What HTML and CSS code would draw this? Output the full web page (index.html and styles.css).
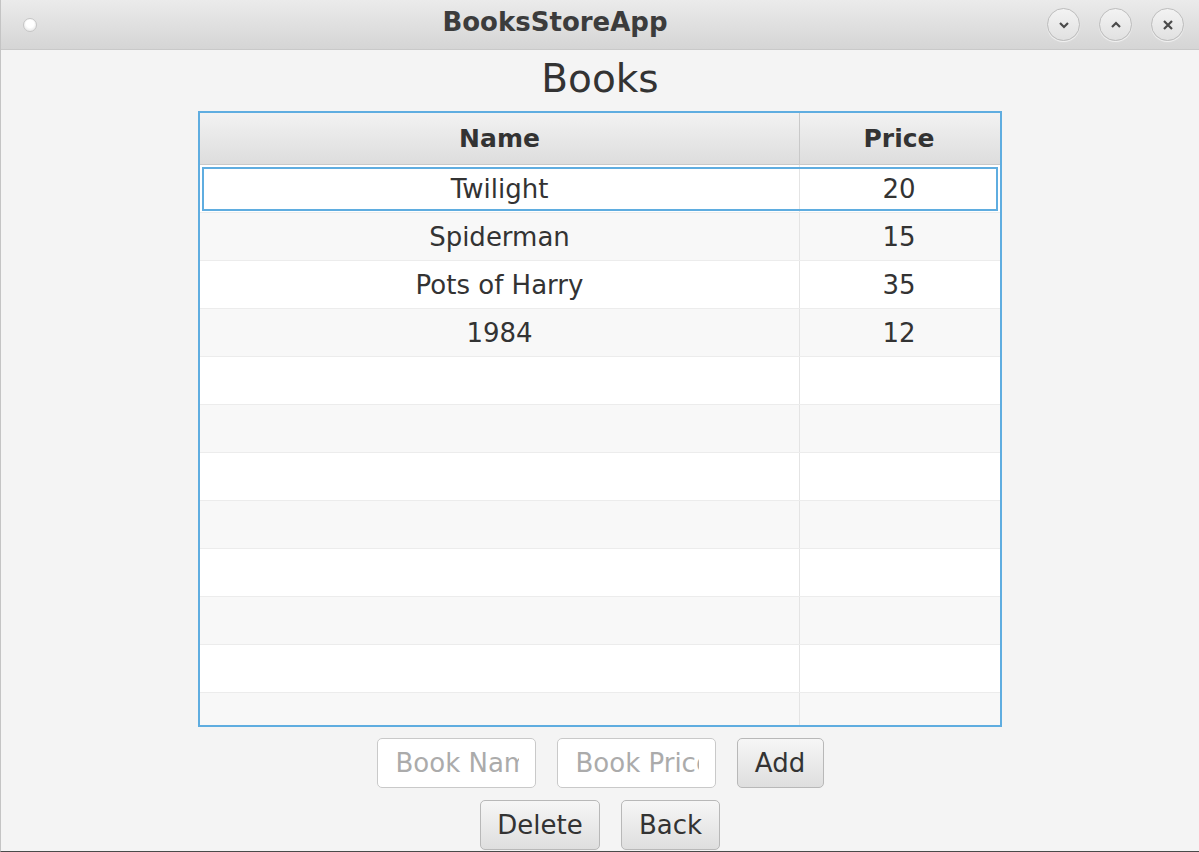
FILE: index.html
```html
<!DOCTYPE html>
<html>
<head>
<meta charset="utf-8">
<link rel="stylesheet" href="styles.css">
</head>
<body>
<div class="window">
  <div class="titlebar">
    <span class="dot"></span>
    <span class="title">BooksStoreApp</span>
    <div class="controls">
      <span class="ctl"><svg width="16" height="16" viewBox="0 0 16 16"><path d="M4 6 L8 10 L12 6" fill="none" stroke="#4a4a4a" stroke-width="2.2"/></svg></span>
      <span class="ctl"><svg width="16" height="16" viewBox="0 0 16 16"><path d="M4 10 L8 6 L12 10" fill="none" stroke="#4a4a4a" stroke-width="2.2"/></svg></span>
      <span class="ctl"><svg width="16" height="16" viewBox="0 0 16 16"><path d="M4 4 L12 12 M12 4 L4 12" fill="none" stroke="#4a4a4a" stroke-width="2.2"/></svg></span>
    </div>
  </div>
  <div class="content">
    <h1 class="heading">Books</h1>
    <div class="table">
      <div class="thead">
        <div class="th name">Name</div>
        <div class="th price">Price</div>
      </div>
      <div class="tbody">
        <div class="row selected"><div class="td name">Twilight</div><div class="td price">20</div></div>
        <div class="row"><div class="td name">Spiderman</div><div class="td price">15</div></div>
        <div class="row"><div class="td name">Pots of Harry</div><div class="td price">35</div></div>
        <div class="row"><div class="td name">1984</div><div class="td price">12</div></div>
        <div class="row"><div class="td name"></div><div class="td price"></div></div>
        <div class="row"><div class="td name"></div><div class="td price"></div></div>
        <div class="row"><div class="td name"></div><div class="td price"></div></div>
        <div class="row"><div class="td name"></div><div class="td price"></div></div>
        <div class="row"><div class="td name"></div><div class="td price"></div></div>
        <div class="row"><div class="td name"></div><div class="td price"></div></div>
        <div class="row"><div class="td name"></div><div class="td price"></div></div>
        <div class="row"><div class="td name"></div><div class="td price"></div></div>
      </div>
    </div>
    <div class="form-row">
      <input class="field" type="text" placeholder="Book Name">
      <input class="field" type="text" placeholder="Book Price">
      <button class="btn add">Add</button>
    </div>
    <div class="form-row second">
      <button class="btn delete">Delete</button>
      <button class="btn back">Back</button>
    </div>
  </div>
</div>
</body>
</html>
```

FILE: styles.css
```css
html, body {
  margin: 0;
  padding: 0;
  background: #f4f4f4;
}
body {
  font-family: "DejaVu Sans", "Liberation Sans", sans-serif;
  color: #333;
}
.window {
  width: 1199px;
  height: 852px;
  display: flex;
  flex-direction: column;
  overflow: hidden;
  box-sizing: border-box;
  border-left: 1px solid #c4c4c4;
  border-bottom: 1px solid #4a4a4a;
}
.titlebar {
  height: 50px;
  flex: none;
  box-sizing: border-box;
  border-bottom: 1px solid #c9c9c9;
  background: linear-gradient(#ebebeb, #d5d5d5);
  display: flex;
  align-items: center;
  position: relative;
  padding-bottom: 6px;
}
.dot {
  width: 12px;
  height: 12px;
  border-radius: 50%;
  background: radial-gradient(circle at 50% 40%, #ffffff 40%, #ededed 70%);
  border: 1px solid #c6c6c6;
  margin-left: 22px;
  margin-top: 6px;
}
.title {
  position: absolute;
  left: 0;
  width: 1108px;
  top: 5px;
  text-align: center;
  font-weight: bold;
  font-size: 26px;
  color: #3c3c3c;
  line-height: 34px;
}
.controls {
  margin-left: auto;
  margin-right: 15px;
  display: flex;
  gap: 19px;
  margin-top: 6px;
}
.ctl {
  width: 31px;
  height: 31px;
  border-radius: 50%;
  border: 1px solid #bdbdbd;
  background: linear-gradient(#f3f3f3, #e1e1e1);
  box-shadow: 0 1px 1px rgba(255,255,255,0.7);
  display: flex;
  align-items: center;
  justify-content: center;
}
.content {
  flex: 1;
  display: flex;
  flex-direction: column;
  align-items: center;
}
.heading {
  margin: 6px 0 0 0;
  font-size: 39px;
  font-weight: normal;
  line-height: 46px;
  height: 46px;
  color: #333;
}
.table {
  margin-top: 9px;
  width: 804px;
  height: 616px;
  box-sizing: border-box;
  border: 2px solid #5fade0;
  background: #fff;
  display: flex;
  flex-direction: column;
  overflow: hidden;
}
.thead {
  display: flex;
  height: 52px;
  flex: none;
  box-sizing: border-box;
  border-bottom: 1px solid #c9c9c9;
  background: linear-gradient(#f2f2f2, #dddddd);
}
.th {
  display: flex;
  align-items: center;
  justify-content: center;
  font-weight: bold;
  font-size: 25px;
  color: #333;
  box-sizing: border-box;
}
.name {
  width: 600px;
  border-right: 1px solid #e4e4e4;
  box-sizing: border-box;
}
.th.name {
  border-right: 1px solid #c9c9c9;
}
.price {
  width: 198px;
}
.tbody {
  flex: 1;
  overflow: hidden;
}
.row {
  display: flex;
  height: 48px;
  box-sizing: border-box;
  border-bottom: 1px solid #ececec;
  background: #fff;
}
.row:nth-child(even) {
  background: #f8f8f8;
}
.row.selected {
  outline: 2px solid #5fade0;
  outline-offset: -4px;
}
.td {
  display: flex;
  align-items: center;
  justify-content: center;
  font-size: 26px;
  color: #333;
}
.form-row {
  display: flex;
  gap: 21px;
  margin-top: 11px;
  height: 50px;
}
.form-row.second {
  margin-top: 12px;
}
.field {
  width: 159px;
  height: 50px;
  box-sizing: border-box;
  border: 1px solid #c9c9c9;
  border-radius: 5px;
  background: #fff;
  padding: 0 16px 0 18px;
  font-family: "DejaVu Sans", sans-serif;
  font-size: 26px;
  color: #333;
}
.field::placeholder {
  color: #ababab;
}
.btn {
  height: 50px;
  box-sizing: border-box;
  border: 1px solid #b8b8b8;
  border-radius: 5px;
  background: linear-gradient(#f6f6f6, #dedede);
  font-family: "DejaVu Sans", sans-serif;
  font-size: 26px;
  color: #333;
  padding: 0;
}
.add { width: 87px; }
.delete { width: 120px; }
.back { width: 99px; }
```
